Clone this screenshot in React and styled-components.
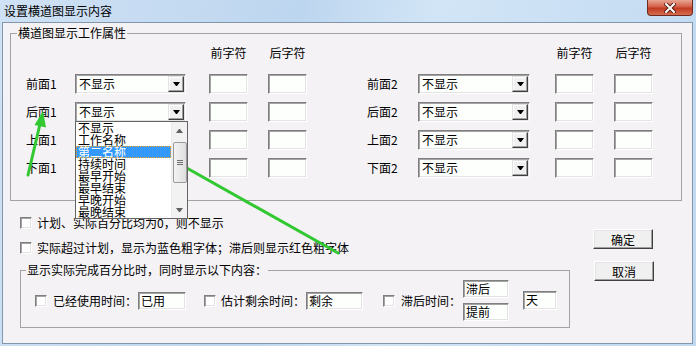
import React from "react";
import styled, { createGlobalStyle } from "styled-components";

const Global = createGlobalStyle`
  html, body { margin: 0; padding: 0; background: #c7dcf1; }
  body { font-family: "Noto Sans CJK SC", "Noto Sans", sans-serif; font-size: 12px; color: #000; }
  * { box-sizing: border-box; }
`;

const Window = styled.div`
  position: relative;
  width: 696px;
  height: 346px;
  display: flex;
  flex-direction: column;
  overflow: hidden;
  background: linear-gradient(100deg, #cfe1f4 0%, #bdd6ef 40%, #d2e5f6 58%, #c0d9f1 100%);
`;

const TitleBar = styled.div`
  height: 22px;
  flex-shrink: 0;
  display: flex;
  align-items: flex-start;
  justify-content: space-between;
`;

const Title = styled.div`
  padding: 4px 0 0 4px;
  line-height: 14px;
  font-size: 12px;
  color: #000;
`;

const CloseBtn = styled.div`
  width: 46px;
  height: 16px;
  margin-right: 3px;
  border: 1px solid #6d2b20;
  border-top: none;
  border-radius: 0 0 4px 4px;
  background: linear-gradient(to bottom, #e8a592 0%, #d4654d 42%, #c13b21 55%, #d66d4f 100%);
  display: flex;
  align-items: center;
  justify-content: center;
`;

const Client = styled.div`
  flex: 1;
  margin: 0 3px 2px 2px;
  border: 1px solid #8396aa;
  background: #f4f2f5;
  display: flex;
  flex-direction: column;
`;

const GroupBox = styled.fieldset`
  margin: ${(p) => p.$m};
  padding: 0;
  border: 1px solid #a3a3a3;
  min-width: 0;
  width: ${(p) => (p.$w ? `${p.$w}px` : "auto")};
`;

const Legend = styled.legend`
  margin-left: ${(p) => p.$ml}px;
  padding: 0 1px;
  height: 14px;
  line-height: 14px;
  font-size: 12px;
`;

const AttrArea = styled.div`
  padding: 4px 0 22px 15px;
  display: flex;
  flex-direction: column;
`;

const Row = styled.div`
  display: flex;
  align-items: center;
  height: ${(p) => p.$h ?? 20}px;
  margin-top: ${(p) => p.$mt ?? 0}px;
`;

const Half = styled.div`
  display: flex;
  align-items: center;
  margin-left: ${(p) => p.$ml}px;
`;

const Label = styled.div`
  width: ${(p) => p.$w}px;
  flex-shrink: 0;
  line-height: 14px;
  white-space: nowrap;
`;

const ColHead = styled.div`
  width: 39px;
  margin-left: ${(p) => p.$ml}px;
  text-align: center;
  line-height: 14px;
  white-space: nowrap;
`;

const Sunken = styled.div`
  border: 1px solid;
  border-color: #7f7f7f #ffffff #ffffff #7f7f7f;
  box-shadow: inset 1px 1px 0 #a3a3a3, inset -1px -1px 0 #e3e3e3;
  background: #fdfffd;
`;

const Combo = styled(Sunken)`
  position: relative;
  width: ${(p) => p.$w}px;
  height: 20px;
  padding: 1px;
  display: flex;
  align-items: center;
  flex-shrink: 0;
`;

const ComboText = styled.div`
  flex: 1;
  padding-left: 2px;
  line-height: 16px;
  white-space: nowrap;
`;

const DropBtn = styled.div`
  width: 16px;
  height: 16px;
  background: #f0f0f0;
  border: 1px solid;
  border-color: #e3e3e3 #404040 #404040 #e3e3e3;
  box-shadow: inset -1px -1px 0 #a0a0a0, inset 1px 1px 0 #ffffff;
  display: flex;
  align-items: center;
  justify-content: center;
`;

const DownTri = styled.span`
  width: 1px;
  height: 0;
  border-left: 3px solid transparent;
  border-right: 3px solid transparent;
  border-top: 4px solid ${(p) => p.$c ?? "#000"};
  box-sizing: content-box;
`;

const UpTri = styled.span`
  width: 1px;
  height: 0;
  border-left: 3px solid transparent;
  border-right: 3px solid transparent;
  border-bottom: 4px solid ${(p) => p.$c ?? "#000"};
  box-sizing: content-box;
`;

const TextBox = styled(Sunken)`
  width: ${(p) => p.$w}px;
  height: ${(p) => p.$h ?? 20}px;
  margin-left: ${(p) => p.$ml ?? 0}px;
  flex-shrink: 0;
  padding-left: 2px;
  line-height: ${(p) => (p.$h ?? 20) - 3}px;
  white-space: nowrap;
`;

const ListBox = styled.div`
  position: absolute;
  z-index: 5;
  top: 18px;
  left: -1px;
  width: 113px;
  height: 98px;
  border: 1px solid #646464;
  background: #ffffff;
  display: flex;
`;

const ListItems = styled.div`
  flex: 1;
  display: flex;
  flex-direction: column;
`;

const ListItem = styled.div`
  height: 12px;
  line-height: 12px;
  padding-left: 2px;
  white-space: nowrap;
  background: ${(p) => (p.$sel ? "#3399ff" : "transparent")};
  color: ${(p) => (p.$sel ? "#ffffff" : "#000")};
  outline: ${(p) => (p.$sel ? "1px dotted #f5a623" : "none")};
  outline-offset: -1px;
`;

const ScrollBar = styled.div`
  width: 16px;
  background: #f2f2f2;
  border-left: 1px solid #ececec;
  display: flex;
  flex-direction: column;
  align-items: center;
`;

const ScrollArrow = styled.div`
  height: 17px;
  width: 100%;
  display: flex;
  align-items: center;
  justify-content: center;
`;

const Thumb = styled.div`
  margin-top: 3px;
  width: 14px;
  height: 41px;
  border: 1px solid #9b9b9b;
  border-radius: 2px;
  background: linear-gradient(to right, #f4f4f4, #dedede);
  display: flex;
  align-items: center;
  justify-content: center;
`;

const Grip = styled.div`
  width: 6px;
  height: 5px;
  background: repeating-linear-gradient(to bottom, #6f6f6f 0 1px, transparent 1px 2px);
`;

const Spacer = styled.div`
  flex: 1;
`;

const Lower = styled.div`
  display: flex;
  margin-left: 17px;
`;

const LeftCol = styled.div`
  width: 550px;
  padding-top: 15px;
  display: flex;
  flex-direction: column;
`;

const RightCol = styled.div`
  margin-left: 23px;
  padding-top: 28px;
  display: flex;
  flex-direction: column;
  gap: 12px;
`;

const CheckRow = styled.div`
  display: flex;
  align-items: center;
  height: 14px;
  margin-top: ${(p) => p.$mt ?? 0}px;
`;

const CheckBox = styled(Sunken)`
  width: 12px;
  height: 12px;
  flex-shrink: 0;
  margin-left: ${(p) => p.$ml ?? 0}px;
  background: #ffffff;
`;

const Text = styled.span`
  margin-left: ${(p) => p.$ml ?? 0}px;
  line-height: 14px;
  white-space: nowrap;
`;

const OptionsRow = styled.div`
  display: flex;
  align-items: center;
  padding: 3px 0 6px 14px;
`;

const Stack = styled.div`
  display: flex;
  flex-direction: column;
  gap: 5px;
  margin-left: ${(p) => p.$ml}px;
`;

const Button = styled.button`
  width: 60px;
  height: 20px;
  margin: 0 0 0 ${(p) => p.$ml ?? 0}px;
  padding: 0;
  font: inherit;
  font-size: 12px;
  color: #000;
  background: #f0f0f0;
  border: 1px solid;
  border-color: #ffffff #404040 #404040 #ffffff;
  box-shadow: inset -1px -1px 0 #a0a0a0, inset 1px 1px 0 #e3e3e3;
`;

const Overlay = styled.svg`
  position: absolute;
  top: 0;
  left: 0;
  pointer-events: none;
`;

const halves = {
  left: { ml: 0, labelW: 49, comboW: 111, t1: 23, t2: 20, n: "1" },
  right: { ml: 60, labelW: 51, comboW: 112, t1: 25, t2: 20, n: "2" },
};

const listItems = ["不显示", "工作名称", "第二名称", "持续时间", "最早开始", "最早结束", "早晚开始", "最晚结束"];

function DropList() {
  return (
    <ListBox>
      <ListItems>
        {listItems.map((t, i) => (
          <ListItem key={t} $sel={i === 2}>
            {t}
          </ListItem>
        ))}
      </ListItems>
      <ScrollBar>
        <ScrollArrow>
          <UpTri $c="#606060" />
        </ScrollArrow>
        <Thumb>
          <Grip />
        </Thumb>
        <Spacer />
        <ScrollArrow>
          <DownTri $c="#606060" />
        </ScrollArrow>
      </ScrollBar>
    </ListBox>
  );
}

function HeaderHalf({ side }) {
  const h = halves[side];
  return (
    <Half $ml={h.ml}>
      <Label $w={h.labelW} />
      <Label $w={h.comboW} />
      <ColHead $ml={h.t1}>前字符</ColHead>
      <ColHead $ml={h.t2}>后字符</ColHead>
    </Half>
  );
}

function FieldHalf({ side, name, open }) {
  const h = halves[side];
  return (
    <Half $ml={h.ml}>
      <Label $w={h.labelW}>
        {name}
        {h.n}
      </Label>
      <Combo $w={h.comboW}>
        <ComboText>不显示</ComboText>
        <DropBtn>
          <DownTri />
        </DropBtn>
        {open && <DropList />}
      </Combo>
      <TextBox $w={39} $ml={h.t1} />
      <TextBox $w={39} $ml={h.t2} />
    </Half>
  );
}

const rows = ["前面", "后面", "上面", "下面"];

export default function App() {
  return (
    <>
      <Global />
      <Window>
        <TitleBar>
          <Title>设置横道图显示内容</Title>
          <CloseBtn>
            <svg width="12" height="10" viewBox="0 0 12 10">
              <path d="M2 1 L10 9 M10 1 L2 9" stroke="#5a1e14" strokeWidth="4" strokeLinecap="square" />
              <path d="M2 1 L10 9 M10 1 L2 9" stroke="#ffffff" strokeWidth="2" strokeLinecap="square" />
            </svg>
          </CloseBtn>
        </TitleBar>
        <Client>
          <GroupBox $m="3px 10px 0 7px">
            <Legend $ml={6}>横道图显示工作属性</Legend>
            <AttrArea>
              <Row $h={18}>
                <HeaderHalf side="left" />
                <HeaderHalf side="right" />
              </Row>
              {rows.map((r, i) => (
                <Row key={r} $mt={i === 0 ? 12 : 8}>
                  <FieldHalf side="left" name={r} open={i === 1} />
                  <FieldHalf side="right" name={r} />
                </Row>
              ))}
            </AttrArea>
          </GroupBox>
          <Lower>
            <LeftCol>
              <CheckRow>
                <CheckBox />
                <Text $ml={5}>计划、实际百分比均为0，则不显示</Text>
              </CheckRow>
              <CheckRow $mt={11}>
                <CheckBox />
                <Text $ml={5}>实际超过计划，显示为蓝色粗字体；滞后则显示红色粗字体</Text>
              </CheckRow>
              <GroupBox $m="8px 0 0 0" $w={550}>
                <Legend $ml={5}>显示实际完成百分比时，同时显示以下内容：</Legend>
                <OptionsRow>
                  <CheckBox />
                  <Text $ml={6}>已经使用时间：</Text>
                  <TextBox $w={48} $h={18} $ml={1}>已用</TextBox>
                  <CheckBox $ml={18} />
                  <Text $ml={5}>估计剩余时间：</Text>
                  <TextBox $w={57} $h={18} $ml={1}>剩余</TextBox>
                  <CheckBox $ml={20} />
                  <Text $ml={6}>滞后时间：</Text>
                  <Stack $ml={2}>
                    <TextBox $w={46} $h={18}>滞后</TextBox>
                    <TextBox $w={46} $h={18}>提前</TextBox>
                  </Stack>
                  <TextBox $w={34} $h={19} $ml={14}>天</TextBox>
                </OptionsRow>
              </GroupBox>
            </LeftCol>
            <RightCol>
              <Button>确定</Button>
              <Button $ml={1}>取消</Button>
            </RightCol>
          </Lower>
        </Client>
        <Overlay width="696" height="346" viewBox="0 0 696 346">
          <g stroke="#32c832" strokeWidth="3" strokeLinecap="round">
            <line x1="28" y1="175" x2="40" y2="124" />
            <line x1="338" y1="253" x2="169" y2="158" />
          </g>
          <g fill="#32c832">
            <polygon points="43,111 34.5,125 46,127.5" />
            <polygon points="157,151.5 174,152.5 167,165" />
          </g>
          <path
            d="M0 0 L0 15 L4 11 L7 17.5 L9.5 16.5 L6.5 10 L11 10 Z"
            transform="translate(153.5 149.5)"
            fill="#ffffff"
            stroke="#000000"
            strokeWidth="1"
            strokeLinejoin="miter"
          />
        </Overlay>
      </Window>
    </>
  );
}
